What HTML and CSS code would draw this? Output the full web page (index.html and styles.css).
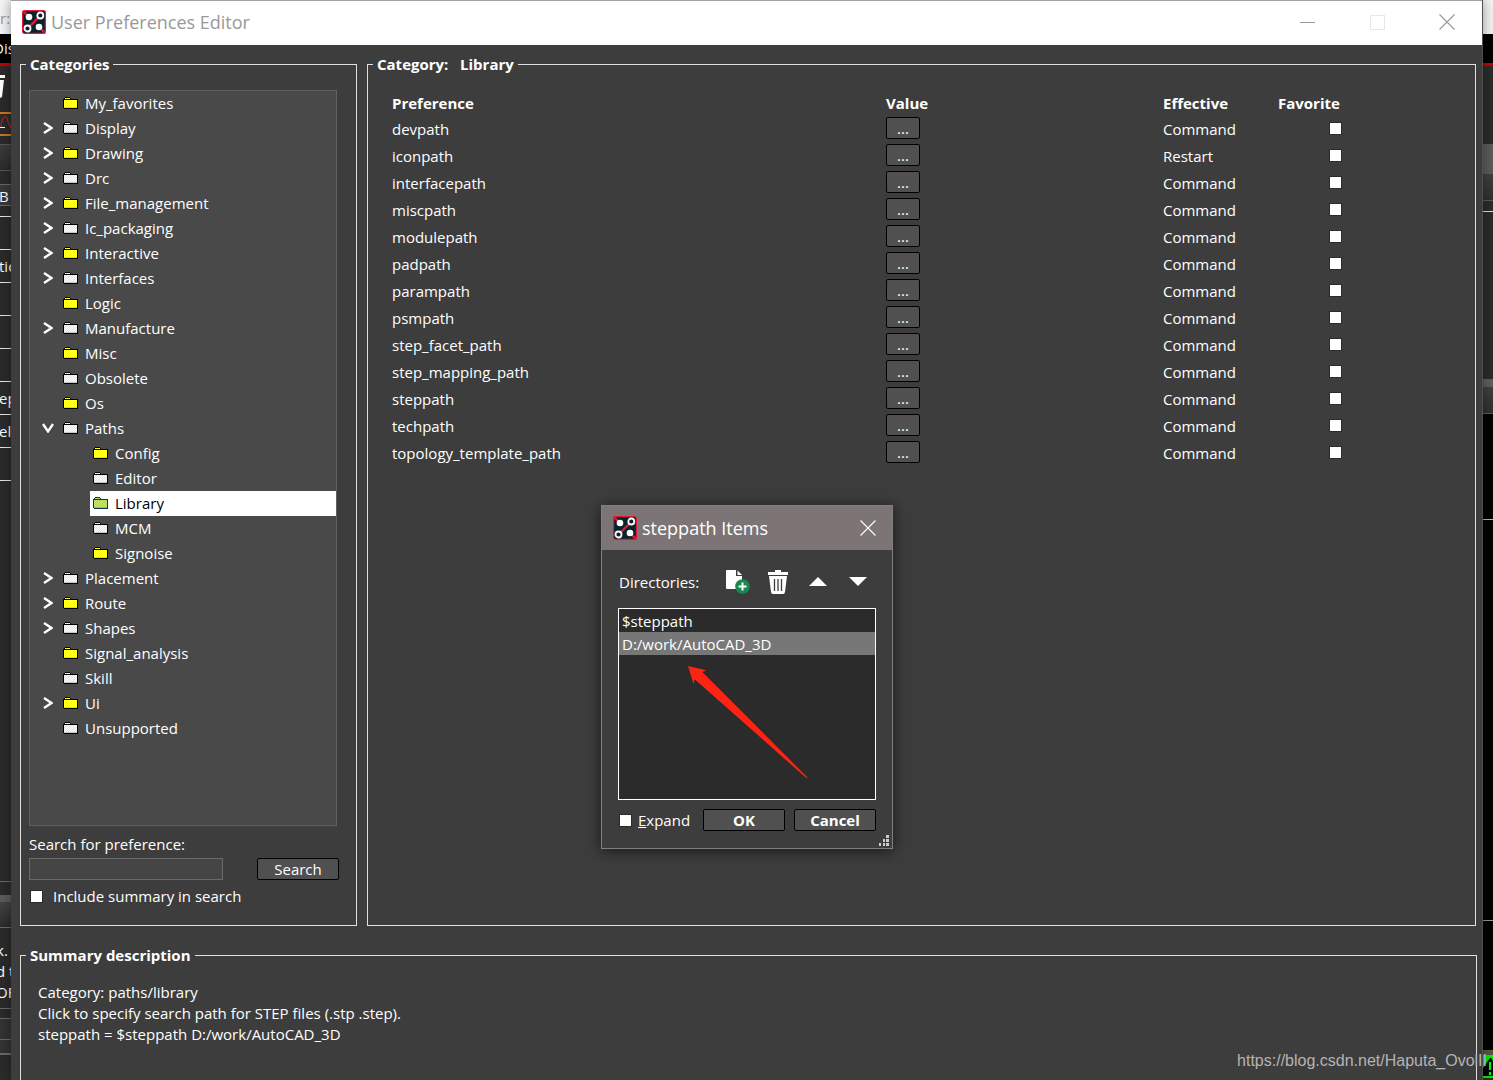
FILE: index.html
```html
<!DOCTYPE html>
<html lang="en">
<head>
<meta charset="utf-8">
<title>User Preferences Editor</title>
<link rel="stylesheet" href="styles.css">
</head>
<body>
<svg class="defs" aria-hidden="true">
  <defs>
    <pattern id="dither" width="2" height="2" patternUnits="userSpaceOnUse">
      <rect width="2" height="2" fill="#fff"/><rect width="1" height="1" fill="#ff0"/><rect x="1" y="1" width="1" height="1" fill="#ff0"/>
    </pattern>
    <pattern id="dither-sel" width="2" height="2" patternUnits="userSpaceOnUse">
      <rect width="2" height="2" fill="#a6d0a0"/><rect width="1" height="1" fill="#c8e868"/><rect x="1" y="1" width="1" height="1" fill="#c8e868"/>
    </pattern>
    <symbol id="folder" viewBox="0 0 15 12">
      <path d="M2 0h5v1h1v1h7v10H1v-1H0V2h1V1h1z" fill="#000"/>
      <path d="M2 1h5v1H2zM1 3h13v7H1z" fill="url(#dither)"/>
      <path d="M1 10h13v1H1z" fill="#c8c8c8"/>
    </symbol>
    <symbol id="folder-sel" viewBox="0 0 15 12">
      <path d="M2 0h5v1h1v1h7v10H1v-1H0V2h1V1h1z" fill="#12305c"/>
      <path d="M2 1h5v1H2zM1 3h13v7H1z" fill="url(#dither-sel)"/>
      <path d="M1 10h13v1H1z" fill="#8fb3d4"/>
    </symbol>
    <symbol id="chev" viewBox="0 0 10 12"><path d="M1 1l7.500 5L1 11" fill="none" stroke="#fff" stroke-width="2.300"/></symbol>
    <symbol id="chev-open" viewBox="0 0 12 10"><path d="M1 1l5 7.500L11 1" fill="none" stroke="#fff" stroke-width="2.300"/></symbol>
    <symbol id="logo" viewBox="0 0 24 24">
      <rect x=".6" y=".6" width="22.800" height="22.800" rx="2" fill="#06232f" stroke="#e31837" stroke-width="1.200"/>
      <path d="M1 1l6 6M17 17l6 6M8 16l8-8" stroke="#e31837" stroke-width="2.400"/>
      <circle cx="7" cy="7" r="3.300" fill="#fff"/><circle cx="17" cy="17" r="3.300" fill="#fff"/>
      <circle cx="18.300" cy="5.500" r="3" fill="#06232f" stroke="#fff" stroke-width="1.800"/>
      <circle cx="5.500" cy="18.500" r="3" fill="#06232f" stroke="#fff" stroke-width="1.800"/>
    </symbol>
    <symbol id="close" viewBox="0 0 16 16"><path d="M.5 .5l15 15M15.500 .5l-15 15" fill="none" stroke="currentColor" stroke-width="1.100"/></symbol>
  </defs>
</svg>

<div class="desktop">
  <div class="strip strip-left" aria-hidden="true">
    <div class="s-title">r:</div>
    <div class="s-menu">Dis</div>
    <div class="s-tools"><svg width="6" height="24" viewBox="0 0 6 24"><path d="M0 0h5v3H0zM0 5h4l-2 17-2 1z" fill="#fff"/></svg></div>
    <div class="s-active"><svg width="11" height="20" viewBox="0 0 11 20"><path d="M1 13C2 0 7 0 8 8l3 6" fill="none" stroke="#d02020"/><path d="M0 13.500h5" stroke="#fff"/></svg></div>
    <div class="s-bar"></div>
    <div class="s-cell">B</div>
    <div class="s-grid">
      <div></div><div>tio</div><div></div><div></div><div></div><div>ep</div><div>eli</div><div></div>
    </div>
    <div class="s-empty"></div>
    <div class="s-head"></div>
    <div class="s-log">k.<br>d t<br>OF</div>
    <div class="s-foot"></div>
  </div>

  <main class="window">
    <header class="titlebar">
      <svg class="logo"><use href="#logo"/></svg>
      <h1>User Preferences Editor</h1>
      <button class="win-btn" aria-label="Minimize"><svg width="15" height="1"><rect width="15" height="1" fill="#999"/></svg></button>
      <button class="win-btn" aria-label="Maximize" disabled><svg width="15" height="15"><rect x=".5" y=".5" width="14" height="14" fill="none" stroke="#e6e6e6"/></svg></button>
      <button class="win-btn" aria-label="Close"><svg width="16" height="16"><use href="#close"/></svg></button>
    </header>

    <div class="panes">
      <fieldset class="group categories">
        <legend>Categories</legend>
        <ul class="tree">
          <li><div class="node"><i></i><svg class="folder"><use href="#folder"/></svg>My_favorites</div></li>
          <li><div class="node"><button aria-label="Expand Display"><svg class="chev"><use href="#chev"/></svg></button><svg class="folder"><use href="#folder"/></svg>Display</div></li>
          <li><div class="node"><button aria-label="Expand Drawing"><svg class="chev"><use href="#chev"/></svg></button><svg class="folder"><use href="#folder"/></svg>Drawing</div></li>
          <li><div class="node"><button aria-label="Expand Drc"><svg class="chev"><use href="#chev"/></svg></button><svg class="folder"><use href="#folder"/></svg>Drc</div></li>
          <li><div class="node"><button aria-label="Expand File_management"><svg class="chev"><use href="#chev"/></svg></button><svg class="folder"><use href="#folder"/></svg>File_management</div></li>
          <li><div class="node"><button aria-label="Expand Ic_packaging"><svg class="chev"><use href="#chev"/></svg></button><svg class="folder"><use href="#folder"/></svg>Ic_packaging</div></li>
          <li><div class="node"><button aria-label="Expand Interactive"><svg class="chev"><use href="#chev"/></svg></button><svg class="folder"><use href="#folder"/></svg>Interactive</div></li>
          <li><div class="node"><button aria-label="Expand Interfaces"><svg class="chev"><use href="#chev"/></svg></button><svg class="folder"><use href="#folder"/></svg>Interfaces</div></li>
          <li><div class="node"><i></i><svg class="folder"><use href="#folder"/></svg>Logic</div></li>
          <li><div class="node"><button aria-label="Expand Manufacture"><svg class="chev"><use href="#chev"/></svg></button><svg class="folder"><use href="#folder"/></svg>Manufacture</div></li>
          <li><div class="node"><i></i><svg class="folder"><use href="#folder"/></svg>Misc</div></li>
          <li><div class="node"><i></i><svg class="folder"><use href="#folder"/></svg>Obsolete</div></li>
          <li><div class="node"><i></i><svg class="folder"><use href="#folder"/></svg>Os</div></li>
          <li><div class="node"><button aria-label="Collapse Paths"><svg class="chev-open"><use href="#chev-open"/></svg></button><svg class="folder"><use href="#folder"/></svg>Paths</div>
            <ul class="branch">
              <li><div class="node"><svg class="folder"><use href="#folder"/></svg>Config</div></li>
              <li><div class="node"><svg class="folder"><use href="#folder"/></svg>Editor</div></li>
              <li><div class="node selected"><svg class="folder"><use href="#folder-sel"/></svg>Library</div></li>
              <li><div class="node"><svg class="folder"><use href="#folder"/></svg>MCM</div></li>
              <li><div class="node"><svg class="folder"><use href="#folder"/></svg>Signoise</div></li>
            </ul>
          </li>
          <li><div class="node"><button aria-label="Expand Placement"><svg class="chev"><use href="#chev"/></svg></button><svg class="folder"><use href="#folder"/></svg>Placement</div></li>
          <li><div class="node"><button aria-label="Expand Route"><svg class="chev"><use href="#chev"/></svg></button><svg class="folder"><use href="#folder"/></svg>Route</div></li>
          <li><div class="node"><button aria-label="Expand Shapes"><svg class="chev"><use href="#chev"/></svg></button><svg class="folder"><use href="#folder"/></svg>Shapes</div></li>
          <li><div class="node"><i></i><svg class="folder"><use href="#folder"/></svg>Signal_analysis</div></li>
          <li><div class="node"><i></i><svg class="folder"><use href="#folder"/></svg>Skill</div></li>
          <li><div class="node"><button aria-label="Expand Ui"><svg class="chev"><use href="#chev"/></svg></button><svg class="folder"><use href="#folder"/></svg>Ui</div></li>
          <li><div class="node"><i></i><svg class="folder"><use href="#folder"/></svg>Unsupported</div></li>
        </ul>
        <label class="search-label" for="search">Search for preference:</label>
        <div class="search-row">
          <input id="search" type="text">
          <button class="btn">Search</button>
        </div>
        <label class="check"><input type="checkbox"><span>Include summary in search</span></label>
      </fieldset>

      <fieldset class="group prefs">
        <legend>Category: &nbsp; Library</legend>
        <table>
          <thead><tr><th>Preference</th><th class="c-value">Value</th><th class="c-effective">Effective</th><th class="c-favorite">Favorite</th></tr></thead>
          <tbody>
            <tr><td>devpath</td><td><button class="btn" aria-label="Edit devpath">...</button></td><td>Command</td><td><input type="checkbox" aria-label="Favorite devpath"></td></tr>
            <tr><td>iconpath</td><td><button class="btn" aria-label="Edit iconpath">...</button></td><td>Restart</td><td><input type="checkbox" aria-label="Favorite iconpath"></td></tr>
            <tr><td>interfacepath</td><td><button class="btn" aria-label="Edit interfacepath">...</button></td><td>Command</td><td><input type="checkbox" aria-label="Favorite interfacepath"></td></tr>
            <tr><td>miscpath</td><td><button class="btn" aria-label="Edit miscpath">...</button></td><td>Command</td><td><input type="checkbox" aria-label="Favorite miscpath"></td></tr>
            <tr><td>modulepath</td><td><button class="btn" aria-label="Edit modulepath">...</button></td><td>Command</td><td><input type="checkbox" aria-label="Favorite modulepath"></td></tr>
            <tr><td>padpath</td><td><button class="btn" aria-label="Edit padpath">...</button></td><td>Command</td><td><input type="checkbox" aria-label="Favorite padpath"></td></tr>
            <tr><td>parampath</td><td><button class="btn" aria-label="Edit parampath">...</button></td><td>Command</td><td><input type="checkbox" aria-label="Favorite parampath"></td></tr>
            <tr><td>psmpath</td><td><button class="btn" aria-label="Edit psmpath">...</button></td><td>Command</td><td><input type="checkbox" aria-label="Favorite psmpath"></td></tr>
            <tr><td>step_facet_path</td><td><button class="btn" aria-label="Edit step_facet_path">...</button></td><td>Command</td><td><input type="checkbox" aria-label="Favorite step_facet_path"></td></tr>
            <tr><td>step_mapping_path</td><td><button class="btn" aria-label="Edit step_mapping_path">...</button></td><td>Command</td><td><input type="checkbox" aria-label="Favorite step_mapping_path"></td></tr>
            <tr><td>steppath</td><td><button class="btn" aria-label="Edit steppath">...</button></td><td>Command</td><td><input type="checkbox" aria-label="Favorite steppath"></td></tr>
            <tr><td>techpath</td><td><button class="btn" aria-label="Edit techpath">...</button></td><td>Command</td><td><input type="checkbox" aria-label="Favorite techpath"></td></tr>
            <tr><td>topology_template_path</td><td><button class="btn" aria-label="Edit topology_template_path">...</button></td><td>Command</td><td><input type="checkbox" aria-label="Favorite topology_template_path"></td></tr>
          </tbody>
        </table>
      </fieldset>
    </div>

    <fieldset class="group summary">
      <legend>Summary description</legend>
      <p>Category: paths/library<br>Click to specify search path for STEP files (.stp .step).<br>steppath = $steppath D:/work/AutoCAD_3D</p>
    </fieldset>
  </main>

  <div class="strip strip-right" aria-hidden="true">
    <div class="s-title"></div>
    <div class="s-menu"></div>
    <div class="r-tools"></div>
    <div class="r-tab"></div>
    <div class="r-grad"></div>
    <div class="r-gap"></div>
    <div class="r-panel"></div>
    <div class="r-light"></div>
    <div class="r-grad"></div>
    <div class="r-black"></div>
    <div class="r-canvas"></div>
    <div class="r-canvas-end"></div>
    <div class="r-status"><svg width="11" height="23" viewBox="0 0 11 23"><path d="M7 3L0 13v8h11V8L8 3z" fill="#000"/><path d="M7 7v8M7 17v3" stroke="#0f0" stroke-width="2.200"/></svg></div>
  </div>
</div>

<section class="dialog" role="dialog" aria-label="steppath Items">
  <header class="dialog-title">
    <svg class="logo"><use href="#logo"/></svg>
    <h2>steppath Items</h2>
    <button class="win-btn" aria-label="Close dialog"><svg width="16" height="16"><use href="#close"/></svg></button>
  </header>
  <div class="dialog-tools">
    <span>Directories:</span>
    <button aria-label="Add"><svg width="24" height="24" viewBox="0 0 24 24"><path d="M0 1q0-1 1-1h9v6h6v13H1q-1 0-1-1z" fill="#fff"/><path d="M11.500 .5l4.500 4.500h-4.500z" fill="#fff"/><circle cx="16.500" cy="16.500" r="7.300" fill="#168a4d"/><path d="M16.500 12.500v8M12.500 16.500h8" stroke="#fff" stroke-width="2"/></svg></button>
    <button aria-label="Delete"><svg width="20" height="24" viewBox="0 0 20 24"><path d="M0 2h7V0h6v2h7v3H0zM1 6h18l-2 16q-.3 2-2 2H5q-1.700 0-2-2z" fill="#fff"/><path d="M6.500 9v12M10 9v12M13.500 9v12" stroke="#3d3d3d" stroke-width="1.300"/></svg></button>
    <button aria-label="Move up"><svg width="18" height="9" viewBox="0 0 18 9"><path d="M9 0l9 9H0z" fill="#fff"/></svg></button>
    <button aria-label="Move down"><svg width="18" height="9" viewBox="0 0 18 9"><path d="M9 9l9-9H0z" fill="#fff"/></svg></button>
  </div>
  <ul class="list" role="listbox" aria-label="Directories">
    <li role="option">$steppath</li>
    <li role="option" class="selected" aria-selected="true">D:/work/AutoCAD_3D</li>
  </ul>
  <div class="dialog-actions">
    <label class="check"><input type="checkbox"><span><u>E</u>xpand</span></label>
    <button class="btn">OK</button>
    <button class="btn">Cancel</button>
  </div>
  <svg class="grip" width="10" height="11" viewBox="0 0 10 11"><path d="M7 0h3v3H7zM4 4h2v3H4zM7 4h3v3H7zM0 8h2v3H0zM4 8h2v3H4zM7 8h3v3H7z" fill="#ccc"/></svg>
  <svg class="arrow" width="120" height="113" viewBox="293 512 360 339"><path d="M293 512L348 525L336 530L652 847L649 849L313 552L310 567z" fill="#ff2313"/></svg>
</section>
<div class="watermark">https://blog.csdn.net/Haputa_OvolII</div>
</body>
</html>
```

FILE: styles.css
```css
* { box-sizing: border-box; }
body {
  margin: 0;
  position: relative;
  height: 100vh;
  overflow: hidden;
  background: #2b2b2b;
  color: #fff;
  font: 15px/21px "Open Sans", "Noto Sans", sans-serif;
}
h1, h2, p, ul { margin: 0; padding: 0; }
ul { list-style: none; }
svg { display: block; flex: none; }
button, input { font: inherit; color: inherit; margin: 0; padding: 0; }
button { background: none; border: 0; display: flex; align-items: center; justify-content: center; }
.defs { position: absolute; width: 0; height: 0; }

.desktop { display: grid; grid-template-columns: 11px 1fr 10px; height: 100vh; }

/* Slivers of the application behind the window */
.strip { display: flex; flex-direction: column; overflow: hidden; white-space: nowrap; background: #2b2b2b; }
.strip > div { flex: none; }
.s-title { height: 34px; background: #f4f4f4; color: #999; line-height: 36px; }
.s-menu { height: 32px; background: #000; border-bottom: 3px solid #c80000; line-height: 29px; text-indent: -7px; }
.strip .s-tools { height: 46px; padding-top: 9px; }
.s-active { height: 24px; border: solid #c87820; border-width: 2px 0; }
.s-bar { height: 27px; margin-top: 8px; border: solid #585858; border-width: 1px 0; background: linear-gradient(#3c3c3c, #2b2b2b); }
.s-cell { height: 22px; margin-top: 13px; border: solid #6a6a6a; border-width: 1px 0; background: #3a3a3a; line-height: 22px; text-indent: -1px; }
.s-grid { margin-top: 10px; border-top: 1px solid #e8e8e8; }
.s-grid div { height: 33px; border-bottom: 1px solid #e8e8e8; line-height: 33px; text-indent: -1px; }
.strip .s-empty { flex: 1; }
.s-head { height: 47px; border-top: 1px solid #6a6a6a; border-bottom: 1px solid #6a6a6a; background: linear-gradient(#2b2b2b 13px, #5c5c5c 13px, #5c5c5c 20px, #444 20px, #2b2b2b); }
.s-log { height: 81px; margin-left: -4px; padding-top: 11px; border-top: 1px solid #2b2b2b; border-bottom: 1px solid #6a6a6a; }
.s-foot { height: 71px; background: linear-gradient(#2b2b2b 9px, #6a6a6a 9px, #6a6a6a 10px, #333 10px, #333 30px, #6a6a6a 30px, #6a6a6a 31px, #333 31px, #333 44px, #6a6a6a 44px, #6a6a6a 46px, #2b2b2b 46px); }
.r-tools { height: 78px; }
.r-tab { height: 29px; background: #5c5c5c; }
.r-grad { height: 28px; border: solid #5c5c5c; border-width: 1px 0; background: linear-gradient(#404040, #2f2f2f); }
.r-gap { height: 11px; border-bottom: 1px solid #e0e0e0; }
.r-panel { height: 167px; }
.r-light { height: 7px; background: #5f5f5f; }
.r-black { height: 106px; background: #000; border-bottom: 1px solid #bbb; }
.r-canvas { height: 401px; background: #000; border-bottom: 1px solid #999; }
.strip .r-canvas-end { flex: 1; background: #000; border-bottom: 1px solid #4c7020; }
.r-status { height: 29px; background: #0e0; border-top: 4px solid #555; border-bottom: 2px solid #2b2b2b; }

/* Main window */
.window {
  display: flex;
  flex-direction: column;
  min-width: 0;
  background: #3d3d3d;
  border-right: 1px solid #505050;
  box-shadow: 0 0 12px #0006;
  position: relative;
}
.titlebar {
  display: flex;
  align-items: center;
  height: 45px;
  padding: 0 0 2px 11px;
  background: #fff;
  border-top: 1px solid #a0a0a0;
  color: #999;
}
h1, h2 { flex: 1; margin-left: 5px; font-size: 18px; font-weight: 400; line-height: 24px; }
.logo { width: 24px; height: 24px; }
.win-btn { width: 70px; height: 42px; }

.panes { flex: 1; display: grid; grid-template-columns: 337px 1fr; gap: 10px; padding: 9px 6px 0 9px; min-height: 0; }
.group { min-width: 0; margin: 0; padding: 0 5px; border: 1px solid #e0e0e0; }
legend { padding: 0 4px; font-weight: 700; }
.categories { display: flex; flex-direction: column; padding-bottom: 18px; }
.tree { height: 736px; margin: 15px 14px 0 3px; border: 1px solid #606060; background: #494949; }
.categories .tree { flex: none; }
.node { display: flex; align-items: center; height: 25px; line-height: 25px; }
.node > button, .node > i { width: 33px; height: 24px; padding: 0 0 2px 2px; }
.chev { width: 10px; height: 12px; }
.chev-open { width: 12px; height: 10px; }
.folder { width: 15px; height: 12px; margin: 0 7px 1px 0; shape-rendering: crispEdges; }
.branch { padding-left: 60px; }
.branch .node { padding-left: 3px; }
.node.selected { background: #fff; color: #000; }
.search-label { margin: 8px 0 3px 3px; }
.search-row { display: flex; justify-content: space-between; margin: 0 12px 6px 3px; }
.search-row input { width: 194px; height: 22px; border: 1px solid #6a6a6a; background: #454545; }
.btn { width: 82px; height: 22px; border: 1px solid #000; border-radius: 2px; background: #505050; line-height: 20px; }
.check { display: flex; align-items: center; margin-left: 4px; }
.check span { margin-left: 10px; }
input[type="checkbox"] { appearance: none; display: block; width: 13px; height: 13px; border: 1px solid #2b2b2b; background: #fff; }

table { width: calc(100% - 19px); margin: 17px 0 0 19px; border-collapse: collapse; table-layout: fixed; }
th, td { height: 27px; padding: 0; text-align: left; }
th { height: 22px; }
td:nth-child(odd) { padding-top: 3px; }
td:last-child { padding-top: 1px; }
.c-value { width: 277px; }
.c-effective { width: 115px; }
.c-favorite { width: 192px; }
td .btn { width: 34px; }
td input[type="checkbox"] { margin-left: 51px; }

.summary { height: 135px; margin: 19px 5px 0 9px; border-bottom: 0; }
.summary p { padding: 16px 12px; }

/* Directory list window */
.dialog {
  position: absolute;
  left: 601px;
  top: 505px;
  width: 292px;
  border: 1px solid #808080;
  background: #3d3d3d;
  box-shadow: 0 2px 14px #0009;
}
.dialog-title { display: flex; align-items: center; height: 44px; padding: 0 0 1px 11px; background: #7d7575; }
.dialog-title .win-btn { width: 49px; }
.dialog-tools { display: flex; align-items: center; height: 58px; padding: 5px 14px 0 17px; }
.dialog-tools span { flex: 1; padding-top: 2px; }
.dialog-tools button { width: 40px; height: 30px; }
.list { height: 192px; margin: 0 16px; border: 1px solid #fff; background: #2b2b2b; }
.list li { height: 23px; padding-left: 3px; line-height: 25px; }
.list .selected { background: #777; }
.dialog-actions { display: flex; align-items: center; gap: 9px; padding: 9px 16px 17px 17px; font-weight: 700; }
.dialog-actions .check { flex: 1; margin: 0; font-weight: 400; }
.dialog-actions .check span { margin-left: 6px; }
.grip { position: absolute; right: 3px; bottom: 2px; }
.arrow { position: absolute; left: 86px; top: 160px; }

.watermark { position: absolute; right: 6px; bottom: 9px; color: #b4b4b4; font: 16px/20px "Liberation Sans", Arial, sans-serif; }
```
